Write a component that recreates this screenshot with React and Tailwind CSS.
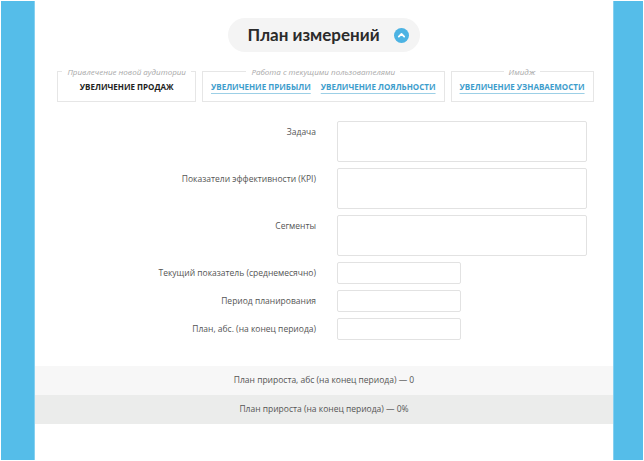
import React from "react";

const tabGroups = [
  { legend: "Привлечение новой аудитории", tabs: [{ label: "Увеличение продаж", active: true }] },
  {
    legend: "Работа с текущими пользователями",
    tabs: [{ label: "Увеличение прибыли" }, { label: "Увеличение лояльности" }],
  },
  { legend: "Имидж", tabs: [{ label: "Увеличение узнаваемости" }] },
];

const fields = [
  { label: "Задача", big: true },
  { label: "Показатели эффективности (KPI)", big: true },
  { label: "Сегменты", big: true },
  { label: "Текущий показатель (среднемесячно)" },
  { label: "Период планирования" },
  { label: "План, абс. (на конец периода)" },
];

function ChevronBadge() {
  return (
    <svg width="15" height="15" viewBox="0 0 15 15">
      <circle cx="7.5" cy="7.5" r="7.5" fill="#4cb3e3" />
      <path d="M4.8 8.6 L7.5 5.9 L10.2 8.6" fill="none" stroke="#fff" strokeWidth="1.8" strokeLinecap="round" strokeLinejoin="round" />
    </svg>
  );
}

export default function App() {
  return (
    <div className="flex h-[461px] w-[644px] bg-white p-px font-['Open_Sans',sans-serif] text-[#555]">
      <div className="w-[34px] border-r border-[#86d0f0] bg-[#55bde9]" />

      <main className="flex flex-1 flex-col">
        <div className="flex justify-center pt-[17px]">
          <div className="flex h-[34px] items-center gap-[14px] rounded-full bg-[#f4f4f4] pl-[19px] pr-[11px]">
            <span className="font-['Lato',sans-serif] text-[17px] font-bold text-[#2b2b2b]">План измерений</span>
            <ChevronBadge />
          </div>
        </div>

        <div className="mt-[14px] flex justify-center gap-[6px] pl-[3px]">
          {tabGroups.map((g) => (
            <fieldset
              key={g.legend}
              className="flex h-[36px] shrink-0 justify-center gap-[2px] whitespace-nowrap border border-[#e6e6e6] px-[4px]"
            >
              <legend className="mx-auto px-[5px] text-[8px] italic leading-[11px] text-[#a9a9a9]">{g.legend}</legend>
              {g.tabs.map((t) => (
                <span
                  key={t.label}
                  className={
                    t.active
                      ? "px-[4px] pt-[4px] text-[8px] font-bold uppercase text-[#222]"
                      : "px-[4px] pt-[4px] text-[8px] font-bold uppercase text-[#3d9dcc] underline decoration-[#9ccfe6] underline-offset-[3px]"
                  }
                >
                  {t.label}
                </span>
              ))}
            </fieldset>
          ))}
        </div>

        <div className="mt-[19px] flex flex-col gap-[6px]">
          {fields.map((f) => (
            <div key={f.label} className="grid grid-cols-[281px_1fr] gap-[21px]">
              <div className="text-right text-[8.5px] leading-[22px]">{f.label}</div>
              <div
                className={
                  f.big
                    ? "h-[41px] w-[250px] rounded-[2px] border border-[#e2e2e2]"
                    : "h-[22px] w-[124px] rounded-[2px] border border-[#e2e2e2]"
                }
              />
            </div>
          ))}
        </div>

        <div className="mt-[26px] flex h-[29px] items-center justify-center bg-[#f7f7f7] text-[8.5px]">
          План прироста, абс (на конец периода) — 0
        </div>
        <div className="flex h-[29px] items-center justify-center bg-[#ebeceb] text-[8.5px]">
          План прироста (на конец периода) — 0%
        </div>
      </main>

      <div className="w-[30px] border-l border-[#86d0f0] bg-[#55bde9]" />
    </div>
  );
}
